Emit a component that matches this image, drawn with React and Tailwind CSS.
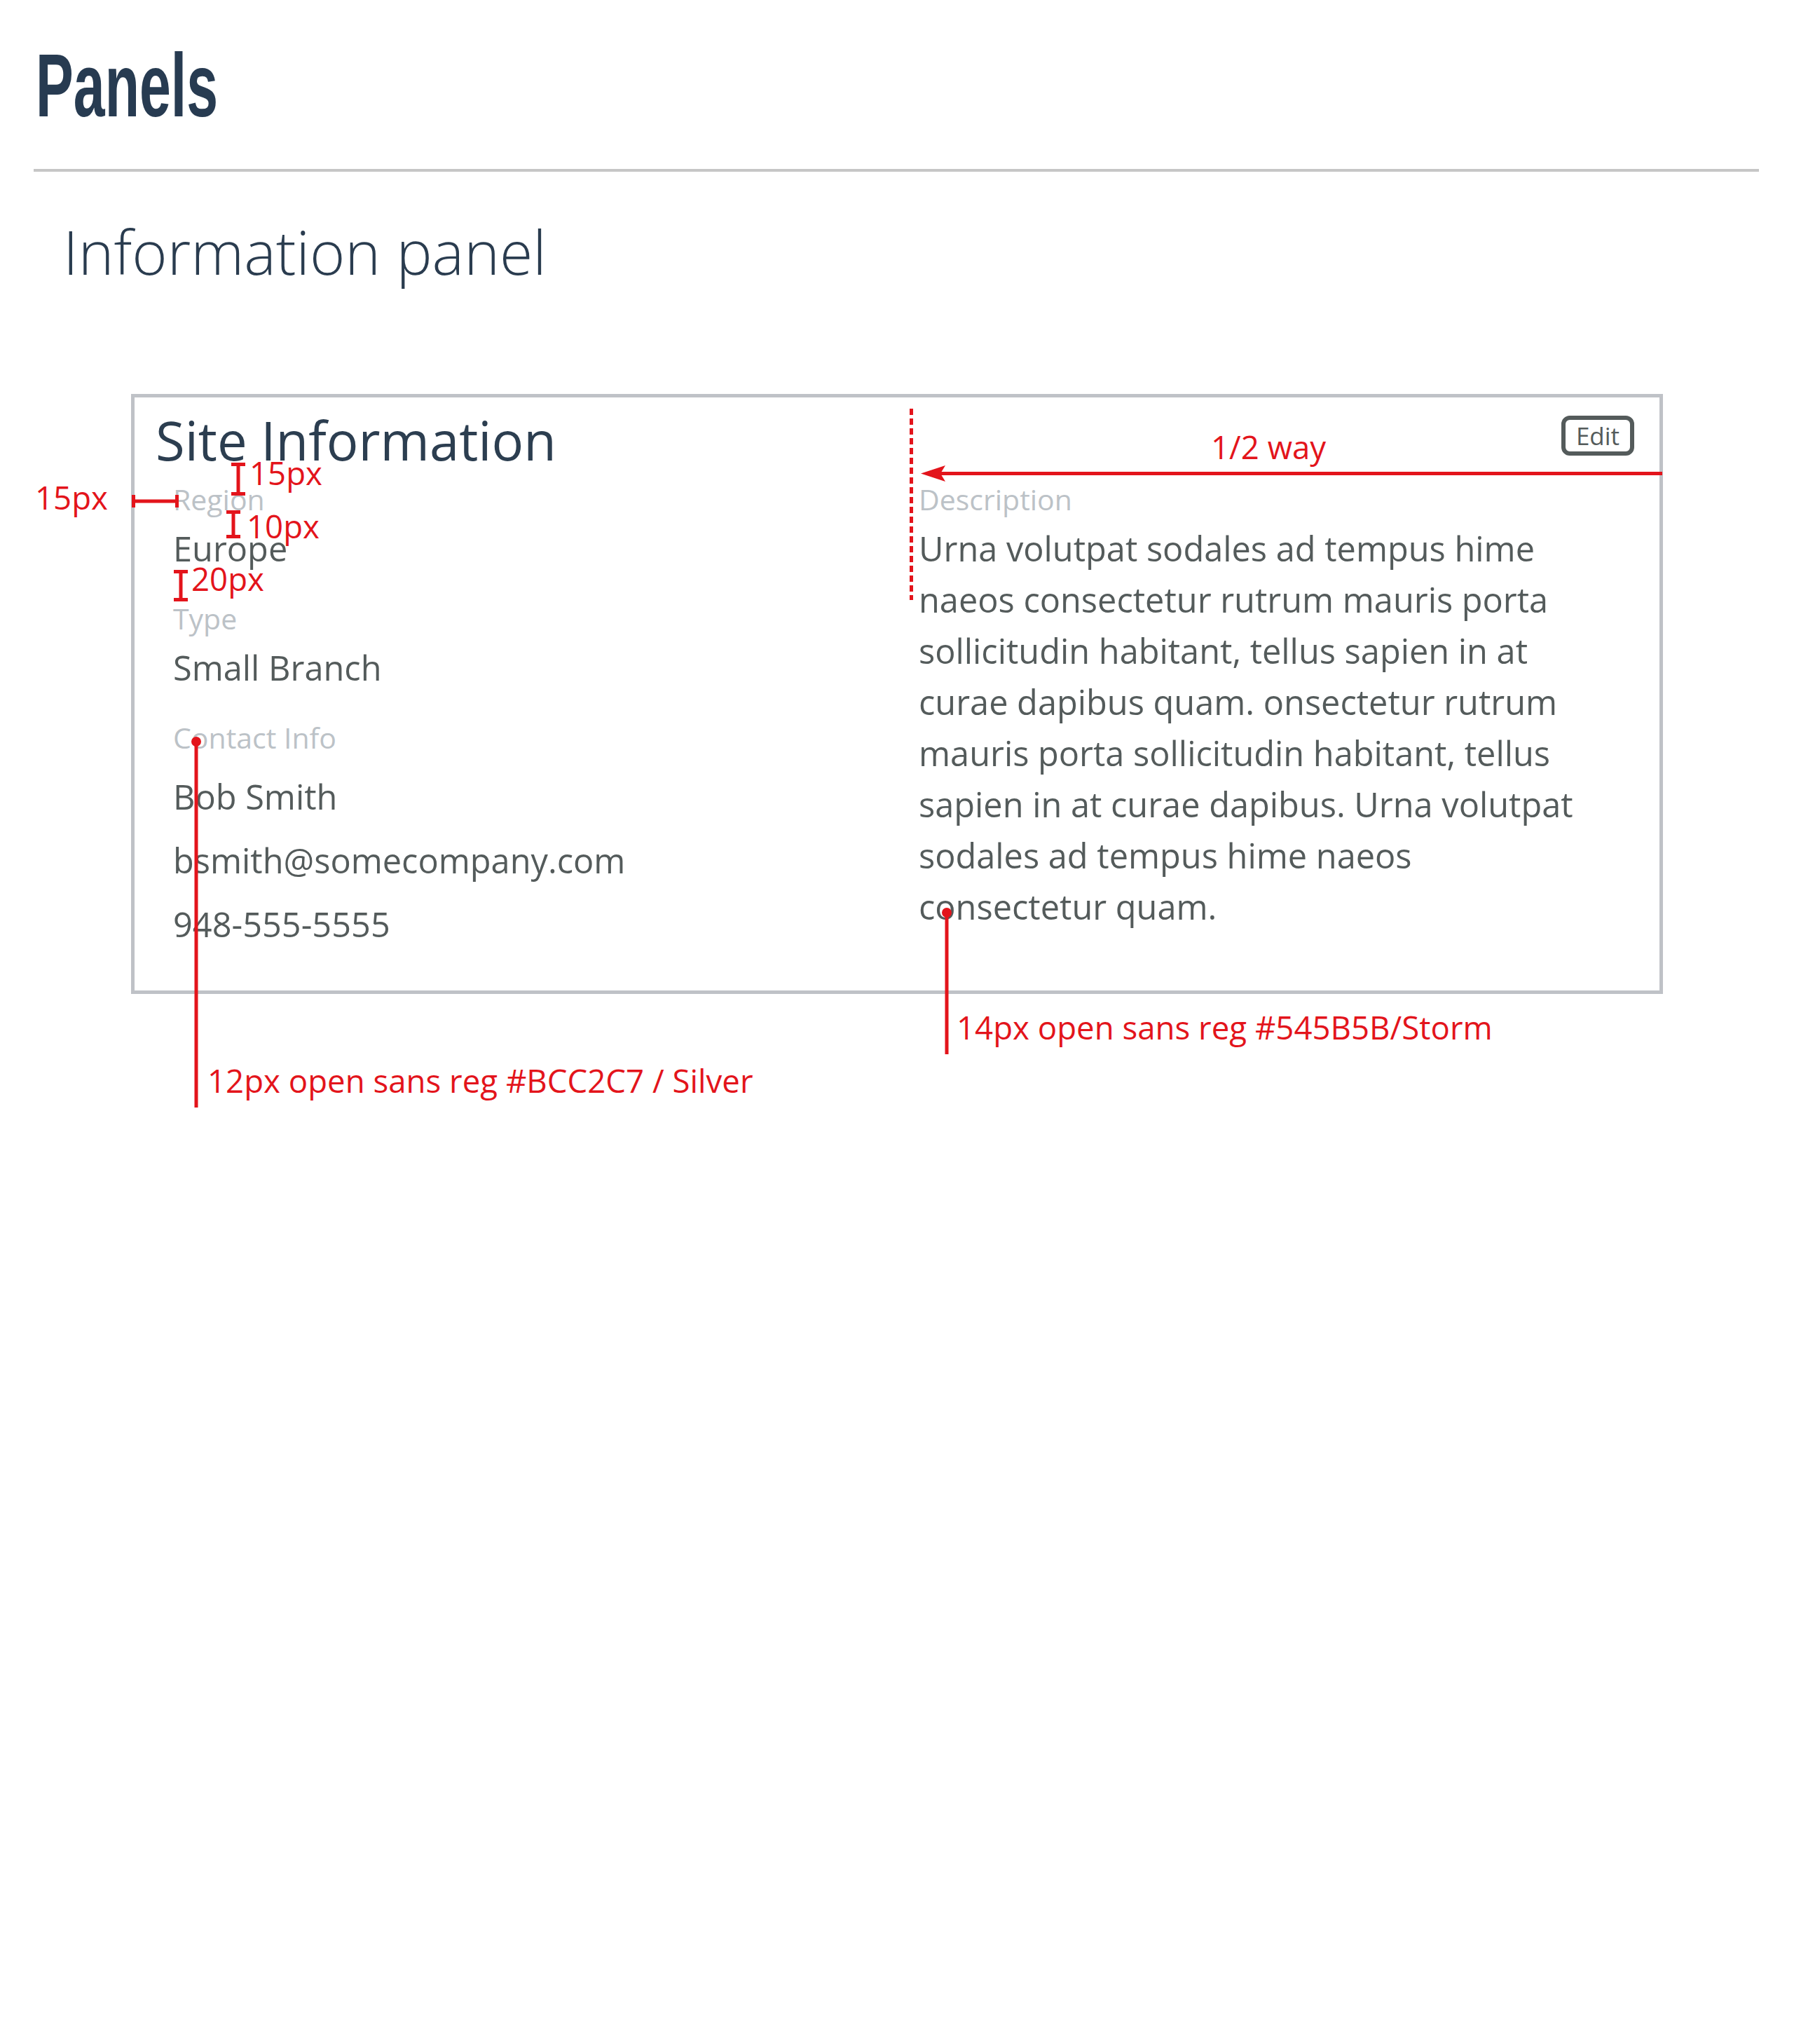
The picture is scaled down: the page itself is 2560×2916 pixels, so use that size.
import React from 'react';

const descriptionLines = [
  'Urna volutpat sodales ad tempus hime',
  'naeos consectetur rutrum mauris porta',
  'sollicitudin habitant, tellus sapien in at',
  'curae dapibus quam. onsectetur rutrum',
  'mauris porta sollicitudin habitant, tellus',
  'sapien in at curae dapibus. Urna volutpat',
  'sodales ad tempus hime naeos',
  'consectetur quam.',
];

const RED = '#e3141b';

function Label({ children, className = '' }) {
  return (
    <div className={`text-[41px] leading-[56px] text-[#bcc2c7] whitespace-nowrap ${className}`}>
      {children}
    </div>
  );
}

function Value({ children, className = '' }) {
  return (
    <div className={`text-[48.7px] leading-[73px] text-[#545b5b] whitespace-nowrap ${className}`}>
      {children}
    </div>
  );
}

// red spec marks drawn over the panel
function Markup() {
  const ibar = (x, y1, y2) => (
    <g>
      <rect x={x - 2.5} y={y1} width="5" height={y2 - y1} fill={RED} />
      <rect x={x - 10} y={y1} width="20" height="5" fill={RED} />
      <rect x={x - 10} y={y2 - 5} width="20" height="5" fill={RED} />
    </g>
  );
  return (
    <svg
      className="absolute left-0 top-0 pointer-events-none"
      width="2560"
      height="2916"
      viewBox="0 0 2560 2916"
    >
      {/* horizontal 15px */}
      <rect x="190" y="712.5" width="63" height="5" fill={RED} />
      <rect x="188" y="706" width="5" height="18" fill={RED} />
      <rect x="250" y="706" width="5" height="18" fill={RED} />
      {ibar(340, 660, 707)}
      {ibar(333, 728, 768)}
      {ibar(258, 813, 858)}
      {/* half way dashed line */}
      <line x1="1300.5" y1="583" x2="1300.5" y2="856" stroke={RED} strokeWidth="5" strokeDasharray="9 5" />
      {/* arrow */}
      <rect x="1340" y="673" width="1032" height="5" fill={RED} />
      <polygon points="1314,675.5 1349,664 1342,675.5 1349,687" fill={RED} />
      {/* leaders */}
      <circle cx="280" cy="1058" r="7" fill={RED} />
      <rect x="277.5" y="1058" width="5" height="522" fill={RED} />
      <circle cx="1351" cy="1302" r="7" fill={RED} />
      <rect x="1348.5" y="1302" width="5" height="202" fill={RED} />
    </svg>
  );
}

function Note({ className, children }) {
  return (
    <div className={`absolute text-[45.6px] leading-none whitespace-nowrap text-[#e3141b] font-['Open_Sans',sans-serif] ${className}`}>
      {children}
    </div>
  );
}

export default function App() {
  return (
    <div className="relative w-[2560px] min-h-[2916px] bg-white font-['Open_Sans',sans-serif]">
      <div className="pt-[58px] pl-[51px]">
        <h1 className="inline-block origin-left scale-x-[0.63] text-[128px] leading-none font-bold text-[#273b51] font-['Liberation_Sans',Arial,sans-serif]">
          Panels
        </h1>
      </div>

      <div className="mt-[55px] ml-[48px] mr-[50px] h-[4px] bg-[#c6c6c6]" />

      <h2 className="mt-[71px] ml-[90px] text-[86px] leading-none font-light text-[#2a3c4f]">
        Information panel
      </h2>

      <div className="relative mt-[160px] ml-[187px] w-[2186px] border-[5px] border-[#bfc2c7] pt-[16px] pb-[49px] pl-[30px]">
        <h3 className="text-[76px] leading-[90px] text-[#2c3e50]">Site Information</h3>

        <button className="absolute top-[26px] right-[36px] flex h-[57px] w-[104px] items-center justify-center rounded-[12px] border-[6px] border-[#545b5b] text-[35px] leading-none text-[#545b5b]">
          Edit
        </button>

        <div className="mt-[11px] ml-[25px] grid grid-cols-[1064px_972px]">
          <div>
            <Label>Region</Label>
            <Value className="mt-[6px]">Europe</Value>
            <Label className="mt-[35px]">Type</Label>
            <Value className="mt-[6px]">Small Branch</Value>
            <Label className="mt-[35px]">Contact Info</Label>
            <div className="mt-[11px] text-[48.7px] leading-[91px] text-[#545b5b] whitespace-nowrap">
              <div>Bob Smith</div>
              <div>bsmith@somecompany.com</div>
              <div>948-555-5555</div>
            </div>
          </div>
          <div>
            <Label>Description</Label>
            <div className="mt-[6px] text-[48.7px] leading-[73px] text-[#545b5b]">
              {descriptionLines.map((line, i) => (
                <div key={i} className="whitespace-nowrap">{line}</div>
              ))}
            </div>
          </div>
        </div>
      </div>

      <Markup />
      <Note className="left-[50px] top-[687px]">15px</Note>
      <Note className="left-[356px] top-[652px]">15px</Note>
      <Note className="left-[352px] top-[728px]">10px</Note>
      <Note className="left-[273px] top-[803px]">20px</Note>
      <Note className="left-[1728px] top-[615px]">1/2 way</Note>
      <Note className="left-[296px] top-[1519px]">12px open sans reg #BCC2C7 / Silver</Note>
      <Note className="left-[1365px] top-[1443px]">14px open sans reg #545B5B/Storm</Note>
    </div>
  );
}
